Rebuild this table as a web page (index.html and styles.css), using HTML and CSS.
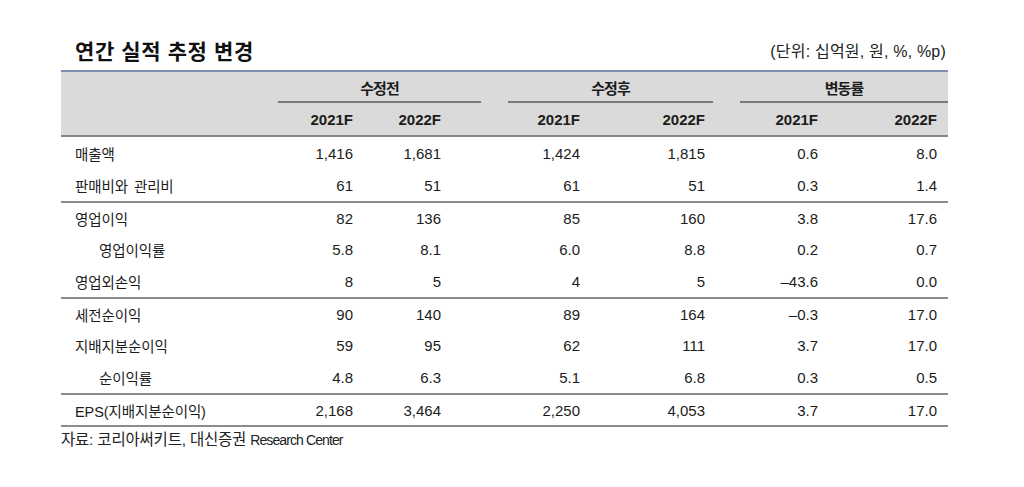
FILE: index.html
```html
<!DOCTYPE html>
<html lang="ko">
<head>
<meta charset="utf-8">
<title>연간 실적 추정 변경</title>
<link rel="stylesheet" href="styles.css">
</head>
<body>
<div class="page">
  <div class="titlebar">
    <h1 class="title">연간 실적 추정 변경</h1>
    <span class="unit">(단위: 십억원, 원, %, %p)</span>
  </div>
  <div class="tbl">
    <div class="thead">
      <div class="hrow groups">
        <div class="lab"></div>
        <div class="grp g1">수정전</div>
        <div class="grp g2">수정후</div>
        <div class="grp g3">변동률</div>
      </div>
      <div class="hrow years">
        <div class="lab"></div>
        <div class="c c1">2021F</div><div class="c c2">2022F</div>
        <div class="c c3">2021F</div><div class="c c4">2022F</div>
        <div class="c c5">2021F</div><div class="c c6">2022F</div>
      </div>
    </div>
    <div class="row">
      <div class="lab">매출액</div>
      <div class="c c1">1,416</div><div class="c c2">1,681</div>
      <div class="c c3">1,424</div><div class="c c4">1,815</div>
      <div class="c c5">0.6</div><div class="c c6">8.0</div>
    </div>
    <div class="row">
      <div class="lab">판매비와 관리비</div>
      <div class="c c1">61</div><div class="c c2">51</div>
      <div class="c c3">61</div><div class="c c4">51</div>
      <div class="c c5">0.3</div><div class="c c6">1.4</div>
    </div>
    <div class="row sep">
      <div class="lab">영업이익</div>
      <div class="c c1">82</div><div class="c c2">136</div>
      <div class="c c3">85</div><div class="c c4">160</div>
      <div class="c c5">3.8</div><div class="c c6">17.6</div>
    </div>
    <div class="row">
      <div class="lab sub">영업이익률</div>
      <div class="c c1">5.8</div><div class="c c2">8.1</div>
      <div class="c c3">6.0</div><div class="c c4">8.8</div>
      <div class="c c5">0.2</div><div class="c c6">0.7</div>
    </div>
    <div class="row">
      <div class="lab">영업외손익</div>
      <div class="c c1">8</div><div class="c c2">5</div>
      <div class="c c3">4</div><div class="c c4">5</div>
      <div class="c c5">–43.6</div><div class="c c6">0.0</div>
    </div>
    <div class="row sep">
      <div class="lab">세전순이익</div>
      <div class="c c1">90</div><div class="c c2">140</div>
      <div class="c c3">89</div><div class="c c4">164</div>
      <div class="c c5">–0.3</div><div class="c c6">17.0</div>
    </div>
    <div class="row">
      <div class="lab">지배지분순이익</div>
      <div class="c c1">59</div><div class="c c2">95</div>
      <div class="c c3">62</div><div class="c c4">111</div>
      <div class="c c5">3.7</div><div class="c c6">17.0</div>
    </div>
    <div class="row">
      <div class="lab sub">순이익률</div>
      <div class="c c1">4.8</div><div class="c c2">6.3</div>
      <div class="c c3">5.1</div><div class="c c4">6.8</div>
      <div class="c c5">0.3</div><div class="c c6">0.5</div>
    </div>
    <div class="row sep">
      <div class="lab">EPS(지배지분순이익)</div>
      <div class="c c1">2,168</div><div class="c c2">3,464</div>
      <div class="c c3">2,250</div><div class="c c4">4,053</div>
      <div class="c c5">3.7</div><div class="c c6">17.0</div>
    </div>
  </div>
  <div class="source">자료: 코리아써키트, 대신증권 <span class="latin">Research Center</span></div>
</div>
</body>
</html>
```

FILE: styles.css
```css
* { box-sizing: border-box; }
html, body { margin: 0; padding: 0; background: #ffffff; }
body {
  font-family: "Liberation Sans", "Noto Sans CJK KR", sans-serif;
  color: #1c1c1c;
}
.page {
  padding: 36px 0 0 61px;
  width: 1024px;
}
.titlebar {
  width: 887px;
  height: 28px;
  margin-bottom: 6px;
  display: flex;
  align-items: center;
  justify-content: space-between;
}
.title {
  margin: 0;
  padding-left: 14px;
  font-family: "Noto Sans CJK KR", sans-serif;
  font-size: 21px;
  font-weight: 700;
  line-height: 28px;
  letter-spacing: 0.6px;
  color: #111;
}
.unit {
  padding-right: 2px;
  font-size: 16px;
  letter-spacing: 0.2px;
  color: #222;
}
.tbl {
  width: 887px;
  border-bottom: 2px solid #8c8c8c;
}
.thead {
  background: #dadada;
  border-top: 2px solid #7d8fb3;
  border-bottom: 2px solid #868686;
}
.hrow { display: flex; align-items: center; }
.groups { height: 31px; }
.years { height: 32px; }
.lab {
  width: 217px;
  flex: none;
  padding-left: 14px;
  font-size: 14.5px;
  letter-spacing: -0.1px;
  word-spacing: 2px;
  white-space: nowrap;
}
.lab.sub { padding-left: 38px; }
.grp {
  flex: none;
  height: 31px;
  display: flex;
  align-items: center;
  justify-content: center;
  border-bottom: 2px solid #7a7a7a;
  font-family: "Noto Sans CJK KR", sans-serif;
  font-weight: 700;
  font-size: 15px;
  letter-spacing: -1px;
  padding-top: 1px;
}
.g1 { width: 203px; margin-right: 27px; }
.g2 { width: 205px; margin-right: 27px; }
.g3 { width: 208px; }
.years .c { font-weight: 700; }
.c {
  flex: none;
  text-align: right;
  font-size: 15px;
  white-space: nowrap;
}
.c1 { width: 102px; padding-right: 27px; }
.c2 { width: 101px; padding-right: 40px; margin-right: 27px; }
.c3 { width: 102px; padding-right: 30px; }
.c4 { width: 103px; padding-right: 8px; margin-right: 27px; }
.c5 { width: 104px; padding-right: 26px; }
.c6 { width: 104px; padding-right: 11px; }
.row {
  display: flex;
  align-items: center;
  height: 32px;
}
.row.sep { border-top: 2px solid #8c8c8c; }
.source {
  margin-top: 4px;
  font-size: 15.5px;
  line-height: 18px;
  letter-spacing: -0.2px;
  color: #222;
}
.source .latin { font-size: 14px; letter-spacing: -0.9px; }
```
